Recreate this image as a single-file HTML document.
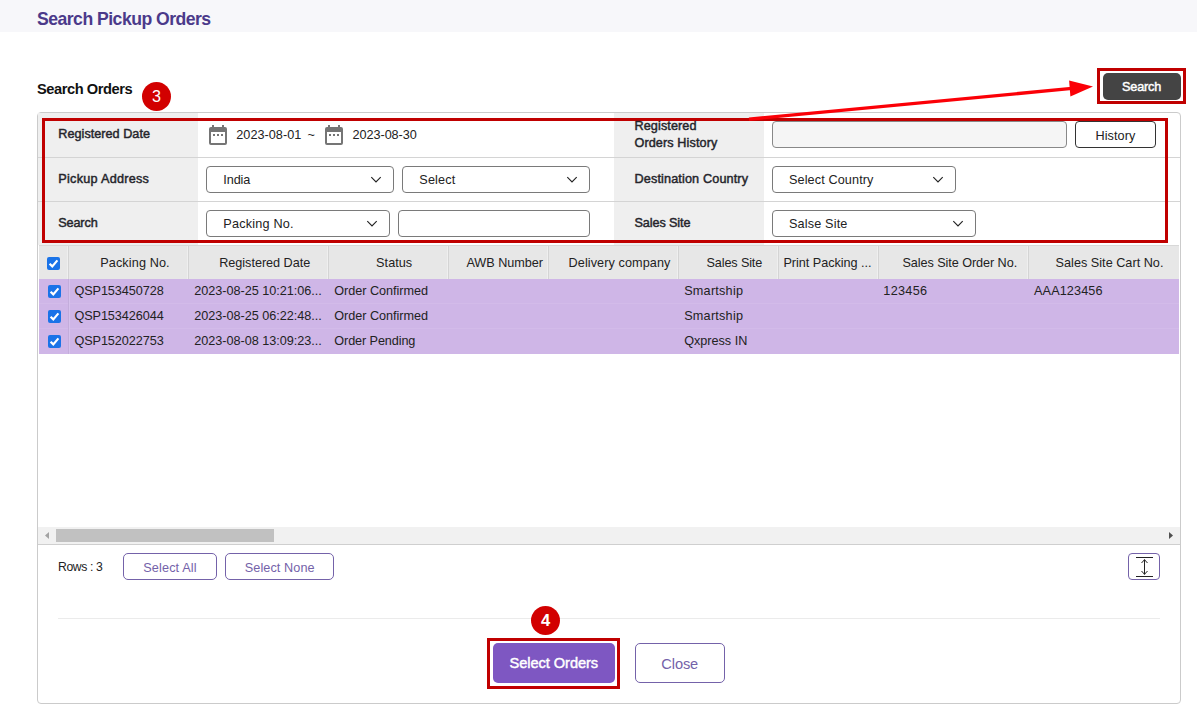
<!DOCTYPE html>
<html lang="en">
<head>
<meta charset="utf-8">
<title>Search Pickup Orders</title>
<style>
html,body{margin:0;padding:0;background:#fff;}
body{width:1197px;height:713px;position:relative;overflow:hidden;font-family:"Liberation Sans", sans-serif;}
.b{position:absolute;display:block;}
.t{position:absolute;display:block;margin:0;padding:0;white-space:nowrap;line-height:1;font-weight:400;transform-origin:0 0;}
.f .chev{position:absolute;right:11px;top:9px;}
</style>
</head>
<body>
<div class="b" style="left:0px;top:0px;width:1197px;height:32px;background:#f7f7fa;"></div>
<div class="b" style="left:37px;top:112px;width:1144px;height:592px;border:1px solid #cbcbcb;border-radius:4px;background:#fff;box-sizing:border-box;"></div>
<div class="b" style="left:38px;top:113px;width:160px;height:132px;background:#efefef;"></div>
<div class="b" style="left:614px;top:113px;width:150px;height:132px;background:#efefef;"></div>
<div class="b" style="left:38px;top:157px;width:1142px;height:1px;background:#d4d4d4;"></div>
<div class="b" style="left:38px;top:201px;width:1142px;height:1px;background:#d4d4d4;"></div>
<div class="b f" style="left:206px;top:166px;width:188px;height:27px;border:1px solid #7a7a7a;border-radius:4px;background:#fff;box-sizing:border-box;"><svg class="chev" width="12" height="8" viewBox="0 0 12 8"><path d="M1.3 1.2 L6 5.9 L10.7 1.2" fill="none" stroke="#222" stroke-width="1.15"/></svg></div>
<div class="b f" style="left:402px;top:166px;width:188px;height:27px;border:1px solid #7a7a7a;border-radius:4px;background:#fff;box-sizing:border-box;"><svg class="chev" width="12" height="8" viewBox="0 0 12 8"><path d="M1.3 1.2 L6 5.9 L10.7 1.2" fill="none" stroke="#222" stroke-width="1.15"/></svg></div>
<div class="b f" style="left:206px;top:210px;width:184px;height:27px;border:1px solid #7a7a7a;border-radius:4px;background:#fff;box-sizing:border-box;"><svg class="chev" width="12" height="8" viewBox="0 0 12 8"><path d="M1.3 1.2 L6 5.9 L10.7 1.2" fill="none" stroke="#222" stroke-width="1.15"/></svg></div>
<div class="b f" style="left:398px;top:210px;width:192px;height:27px;border:1px solid #7a7a7a;border-radius:4px;background:#fff;box-sizing:border-box;"></div>
<div class="b f" style="left:772px;top:121px;width:295px;height:27px;border:1px solid #888;border-radius:4px;background:#f5f5f5;box-sizing:border-box;"></div>
<div class="b f" style="left:772px;top:166px;width:184px;height:27px;border:1px solid #7a7a7a;border-radius:4px;background:#fff;box-sizing:border-box;"><svg class="chev" width="12" height="8" viewBox="0 0 12 8"><path d="M1.3 1.2 L6 5.9 L10.7 1.2" fill="none" stroke="#222" stroke-width="1.15"/></svg></div>
<div class="b f" style="left:772px;top:210px;width:204px;height:27px;border:1px solid #7a7a7a;border-radius:4px;background:#fff;box-sizing:border-box;"><svg class="chev" width="12" height="8" viewBox="0 0 12 8"><path d="M1.3 1.2 L6 5.9 L10.7 1.2" fill="none" stroke="#222" stroke-width="1.15"/></svg></div>
<div class="b" style="left:1075px;top:121px;width:81px;height:27px;border:1px solid #333;border-radius:4px;background:#fff;box-sizing:border-box;"></div>
<svg class="b" style="left:209px;top:125px" width="18" height="20" viewBox="0 0 18 20"><path fill="#757575" d="M3 0h2v2h8V0h2v2h1a2 2 0 0 1 2 2v14a2 2 0 0 1-2 2H2a2 2 0 0 1-2-2V4a2 2 0 0 1 2-2h1z M2 7v11h14V7z M4 9h2v2H4z M8 9h2v2H8z M12 9h2v2h-2z" fill-rule="evenodd"/></svg>
<svg class="b" style="left:325px;top:125px" width="18" height="20" viewBox="0 0 18 20"><path fill="#757575" d="M3 0h2v2h8V0h2v2h1a2 2 0 0 1 2 2v14a2 2 0 0 1-2 2H2a2 2 0 0 1-2-2V4a2 2 0 0 1 2-2h1z M2 7v11h14V7z M4 9h2v2H4z M8 9h2v2H8z M12 9h2v2h-2z" fill-rule="evenodd"/></svg>
<div class="b" style="left:39px;top:245px;width:1140px;height:34px;background:#e7e7e7;border-top:1px solid #d8d8d8;box-sizing:border-box;"></div>
<div class="b" style="left:68px;top:246px;width:1px;height:33px;background:#d4d4d4;"></div>
<div class="b" style="left:67px;top:246px;width:1px;height:33px;background:#efefef;"></div>
<div class="b" style="left:188px;top:246px;width:1px;height:33px;background:#d4d4d4;"></div>
<div class="b" style="left:187px;top:246px;width:1px;height:33px;background:#efefef;"></div>
<div class="b" style="left:328px;top:246px;width:1px;height:33px;background:#d4d4d4;"></div>
<div class="b" style="left:327px;top:246px;width:1px;height:33px;background:#efefef;"></div>
<div class="b" style="left:448px;top:246px;width:1px;height:33px;background:#d4d4d4;"></div>
<div class="b" style="left:447px;top:246px;width:1px;height:33px;background:#efefef;"></div>
<div class="b" style="left:548px;top:246px;width:1px;height:33px;background:#d4d4d4;"></div>
<div class="b" style="left:547px;top:246px;width:1px;height:33px;background:#efefef;"></div>
<div class="b" style="left:678px;top:246px;width:1px;height:33px;background:#d4d4d4;"></div>
<div class="b" style="left:677px;top:246px;width:1px;height:33px;background:#efefef;"></div>
<div class="b" style="left:778px;top:246px;width:1px;height:33px;background:#d4d4d4;"></div>
<div class="b" style="left:777px;top:246px;width:1px;height:33px;background:#efefef;"></div>
<div class="b" style="left:878px;top:246px;width:1px;height:33px;background:#d4d4d4;"></div>
<div class="b" style="left:877px;top:246px;width:1px;height:33px;background:#efefef;"></div>
<div class="b" style="left:1028px;top:246px;width:1px;height:33px;background:#d4d4d4;"></div>
<div class="b" style="left:1027px;top:246px;width:1px;height:33px;background:#efefef;"></div>
<div class="b" style="left:39px;top:279px;width:1140px;height:75px;background:#cfb6e7;"></div>
<div class="b" style="left:39px;top:303px;width:1140px;height:1px;background:#d3bbe9;"></div>
<div class="b" style="left:39px;top:328px;width:1140px;height:1px;background:#d3bbe9;"></div>
<div class="b" style="left:68px;top:279px;width:1px;height:75px;background:#c3addb;"></div>
<div class="b" style="left:69px;top:279px;width:1px;height:75px;background:#d6c1ec;"></div>
<svg class="b" style="left:47px;top:257px" width="13" height="13" viewBox="0 0 13 13"><rect width="13" height="13" rx="2" fill="#1a73e8"/><path d="M2.6 6.7 L5.3 9.4 L10.4 3.4" fill="none" stroke="#fff" stroke-width="2.2"/></svg>
<svg class="b" style="left:48px;top:285px" width="13" height="13" viewBox="0 0 13 13"><rect width="13" height="13" rx="2" fill="#1a73e8"/><path d="M2.6 6.7 L5.3 9.4 L10.4 3.4" fill="none" stroke="#fff" stroke-width="2.2"/></svg>
<svg class="b" style="left:48px;top:310px" width="13" height="13" viewBox="0 0 13 13"><rect width="13" height="13" rx="2" fill="#1a73e8"/><path d="M2.6 6.7 L5.3 9.4 L10.4 3.4" fill="none" stroke="#fff" stroke-width="2.2"/></svg>
<svg class="b" style="left:48px;top:335px" width="13" height="13" viewBox="0 0 13 13"><rect width="13" height="13" rx="2" fill="#1a73e8"/><path d="M2.6 6.7 L5.3 9.4 L10.4 3.4" fill="none" stroke="#fff" stroke-width="2.2"/></svg>
<div class="b" style="left:38px;top:527px;width:1142px;height:17px;background:#f1f1f1;"></div>
<div class="b" style="left:38px;top:544px;width:1142px;height:1px;background:#cfcfcf;"></div>
<div class="b" style="left:56px;top:529px;width:218px;height:13px;background:#c1c1c1;"></div>
<svg class="b" style="left:44px;top:531px" width="6" height="9" viewBox="0 0 6 9"><path d="M5 1 L1 4.5 L5 8z" fill="#a3a3a3"/></svg>
<svg class="b" style="left:1168px;top:531px" width="6" height="9" viewBox="0 0 6 9"><path d="M1 1 L5 4.5 L1 8z" fill="#505050"/></svg>
<div class="b" style="left:123px;top:553px;width:94px;height:27px;border:1px solid #7462a9;border-radius:5px;background:#fff;box-sizing:border-box;"></div>
<div class="b" style="left:225px;top:553px;width:109px;height:27px;border:1px solid #7462a9;border-radius:5px;background:#fff;box-sizing:border-box;"></div>
<div class="b" style="left:1128px;top:553px;width:32px;height:27px;border:1px solid #7462a9;border-radius:4px;background:#fff;box-sizing:border-box;"></div>
<svg class="b" style="left:1134px;top:556px" width="21" height="22" viewBox="0 0 21 22"><g fill="none" stroke="#222" stroke-width="1"><path d="M2 1.5h17M2 20.5h17M10.5 3.5v15M7.5 7 L10.5 3.7 L13.5 7M7.5 15 L10.5 18.3 L13.5 15"/></g></svg>
<div class="b" style="left:58px;top:618px;width:1102px;height:1px;background:#ebebeb;"></div>
<div class="b" style="left:493px;top:643px;width:122px;height:40px;background:#7e57c2;border-radius:5px;"></div>
<div class="b" style="left:635px;top:643px;width:90px;height:40px;border:1px solid #7462a9;border-radius:5px;background:#fff;box-sizing:border-box;"></div>
<div class="b" style="left:1103px;top:73px;width:78px;height:27px;background:#444;border-radius:5px;"></div>
<div class="b" style="left:42px;top:118px;width:1126px;height:125px;border:3px solid #c00000;box-sizing:border-box;"></div>
<div class="b" style="left:1097px;top:68px;width:89px;height:36px;border:3px solid #c00000;box-sizing:border-box;"></div>
<div class="b" style="left:487px;top:638px;width:133px;height:51px;border:3px solid #c00000;box-sizing:border-box;"></div>
<div class="b" style="left:142px;top:82px;width:29px;height:29px;background:#d20000;border-radius:50%;"></div>
<div class="b" style="left:531px;top:606px;width:29px;height:29px;background:#d20000;border-radius:50%;"></div>
<svg class="b" style="left:0;top:0" width="1197" height="713" viewBox="0 0 1197 713"><path d="M749 119.2 L1072 88.4" stroke="#fb0007" stroke-width="3.3" fill="none"/><path d="M1093 86.5 L1069.1 80.6 L1070.4 96.4z" fill="#fb0007"/></svg>
<h1 class="t" id="title" style="left:37.20px;top:9.00px;font-size:19.01px;color:#4b3a8a;font-weight:700;letter-spacing:-0.570px;transform:scaleX(0.9279);">Search Pickup Orders</h1>
<h2 class="t" id="h2" style="left:37.40px;top:82.00px;font-size:14.62px;color:#111;font-weight:700;letter-spacing:-0.439px;transform:scaleX(1.0022);">Search Orders</h2>
<label class="t" id="l1" style="left:58.30px;top:128.00px;font-size:12.67px;color:#25252b;letter-spacing:0.014px;-webkit-text-stroke:0.45px currentColor;">Registered Date</label>
<label class="t" id="l2" style="left:58.30px;top:173.00px;font-size:12.67px;color:#25252b;letter-spacing:0.262px;-webkit-text-stroke:0.45px currentColor;">Pickup Address</label>
<label class="t" id="l3" style="left:58.20px;top:217.00px;font-size:12.67px;color:#25252b;letter-spacing:-0.120px;-webkit-text-stroke:0.45px currentColor;">Search</label>
<label class="t" id="l4a" style="left:634.50px;top:120.00px;font-size:12.67px;color:#25252b;letter-spacing:0.089px;-webkit-text-stroke:0.45px currentColor;">Registered</label>
<label class="t" id="l4b" style="left:634.50px;top:137.00px;font-size:12.67px;color:#25252b;letter-spacing:0.092px;-webkit-text-stroke:0.45px currentColor;">Orders History</label>
<label class="t" id="l5" style="left:634.50px;top:173.00px;font-size:12.67px;color:#25252b;letter-spacing:0.133px;-webkit-text-stroke:0.45px currentColor;">Destination Country</label>
<label class="t" id="l6" style="left:634.50px;top:217.00px;font-size:12.67px;color:#25252b;letter-spacing:-0.111px;-webkit-text-stroke:0.45px currentColor;">Sales Site</label>
<span class="t" id="d1" style="left:236.30px;top:129.00px;font-size:12.67px;color:#222;letter-spacing:0.022px;">2023-08-01</span>
<span class="t" id="tl" style="left:307.40px;top:129.00px;font-size:12.67px;color:#222;">~</span>
<span class="t" id="d2" style="left:352.60px;top:129.00px;font-size:12.67px;color:#222;letter-spacing:-0.067px;">2023-08-30</span>
<span class="t" id="s1" style="left:223.30px;top:174.00px;font-size:12.67px;color:#222;letter-spacing:-0.100px;">India</span>
<span class="t" id="s2" style="left:419.30px;top:174.00px;font-size:12.67px;color:#222;letter-spacing:0.160px;">Select</span>
<span class="t" id="s3" style="left:223.30px;top:218.00px;font-size:12.67px;color:#222;letter-spacing:0.200px;">Packing No.</span>
<span class="t" id="s4" style="left:789.00px;top:174.00px;font-size:12.67px;color:#222;letter-spacing:0.108px;">Select Country</span>
<span class="t" id="s5" style="left:789.00px;top:218.00px;font-size:12.67px;color:#222;letter-spacing:0.156px;">Salse Site</span>
<span class="t" id="hist" style="left:1095.50px;top:130.00px;font-size:12.67px;color:#222;letter-spacing:0.067px;">History</span>
<span class="t" id="srch" style="left:1122.00px;top:81.00px;font-size:12.67px;color:#fff;letter-spacing:-0.160px;-webkit-text-stroke:0.45px currentColor;">Search</span>
<div class="t" id="h_pk" style="left:100.20px;top:257.00px;font-size:12.67px;color:#222;letter-spacing:0.120px;">Packing No.</div>
<div class="t" id="h_rd" style="left:219.20px;top:257.00px;font-size:12.67px;color:#222;letter-spacing:-0.029px;">Registered Date</div>
<div class="t" id="h_st" style="left:376.10px;top:257.00px;font-size:12.67px;color:#222;letter-spacing:0.040px;">Status</div>
<div class="t" id="h_awb" style="left:466.40px;top:257.00px;font-size:12.67px;color:#222;letter-spacing:-0.022px;">AWB Number</div>
<div class="t" id="h_dc" style="left:568.60px;top:257.00px;font-size:12.67px;color:#222;letter-spacing:0.080px;">Delivery company</div>
<div class="t" id="h_ss" style="left:706.50px;top:257.00px;font-size:12.67px;color:#222;letter-spacing:-0.133px;">Sales Site</div>
<div class="t" id="h_pp" style="left:783.40px;top:257.00px;font-size:12.67px;color:#222;letter-spacing:-0.025px;">Print Packing ...</div>
<div class="t" id="h_so" style="left:902.50px;top:257.00px;font-size:12.67px;color:#222;letter-spacing:-0.074px;">Sales Site Order No.</div>
<div class="t" id="h_sc" style="left:1055.60px;top:257.00px;font-size:12.67px;color:#222;letter-spacing:0.011px;">Sales Site Cart No.</div>
<span class="t" id="r1a" style="left:74.40px;top:285.00px;font-size:12.67px;color:#222;letter-spacing:-0.073px;">QSP153450728</span>
<span class="t" id="r2a" style="left:74.40px;top:310.00px;font-size:12.67px;color:#222;letter-spacing:-0.073px;">QSP153426044</span>
<span class="t" id="r3a" style="left:74.40px;top:335.00px;font-size:12.67px;color:#222;letter-spacing:-0.073px;">QSP152022753</span>
<span class="t" id="r1b" style="left:194.20px;top:285.00px;font-size:12.67px;color:#222;letter-spacing:-0.019px;">2023-08-25 10:21:06...</span>
<span class="t" id="r2b" style="left:194.20px;top:310.00px;font-size:12.67px;color:#222;letter-spacing:-0.019px;">2023-08-25 06:22:48...</span>
<span class="t" id="r3b" style="left:194.20px;top:335.00px;font-size:12.67px;color:#222;letter-spacing:-0.019px;">2023-08-08 13:09:23...</span>
<span class="t" id="r1c" style="left:334.30px;top:285.00px;font-size:12.67px;color:#222;letter-spacing:-0.043px;">Order Confirmed</span>
<span class="t" id="r2c" style="left:334.30px;top:310.00px;font-size:12.67px;color:#222;letter-spacing:-0.043px;">Order Confirmed</span>
<span class="t" id="r3c" style="left:334.30px;top:335.00px;font-size:12.67px;color:#222;letter-spacing:-0.100px;">Order Pending</span>
<span class="t" id="r1d" style="left:684.20px;top:285.00px;font-size:12.67px;color:#222;letter-spacing:0.225px;">Smartship</span>
<span class="t" id="r2d" style="left:684.20px;top:310.00px;font-size:12.67px;color:#222;letter-spacing:0.225px;">Smartship</span>
<span class="t" id="r3d" style="left:684.20px;top:335.00px;font-size:12.67px;color:#222;letter-spacing:-0.022px;">Qxpress IN</span>
<span class="t" id="r1e" style="left:883.30px;top:285.00px;font-size:12.67px;color:#222;letter-spacing:0.320px;">123456</span>
<span class="t" id="r1f" style="left:1034.00px;top:285.00px;font-size:12.67px;color:#222;letter-spacing:0.125px;">AAA123456</span>
<span class="t" id="rows" style="left:58.00px;top:561.00px;font-size:12.19px;color:#222;letter-spacing:-0.371px;">Rows : 3</span>
<span class="t" id="sa" style="left:143.30px;top:562.00px;font-size:12.67px;color:#7462a9;letter-spacing:0.133px;">Select All</span>
<span class="t" id="sn" style="left:244.80px;top:562.00px;font-size:12.67px;color:#7462a9;letter-spacing:0.080px;">Select None</span>
<span class="t" id="so" style="left:509.60px;top:656.00px;font-size:14.62px;color:#fff;letter-spacing:-0.067px;-webkit-text-stroke:0.45px currentColor;">Select Orders</span>
<span class="t" id="cl" style="left:661.30px;top:657.00px;font-size:14.62px;color:#7462a9;letter-spacing:-0.100px;">Close</span>
<b class="t" id="c3" style="left:151.90px;top:88.00px;font-size:16.19px;color:#fff;">3</b>
<b class="t" id="c4" style="left:540.90px;top:613.00px;font-size:16.57px;color:#fff;font-weight:700;">4</b>
</body>
</html>
